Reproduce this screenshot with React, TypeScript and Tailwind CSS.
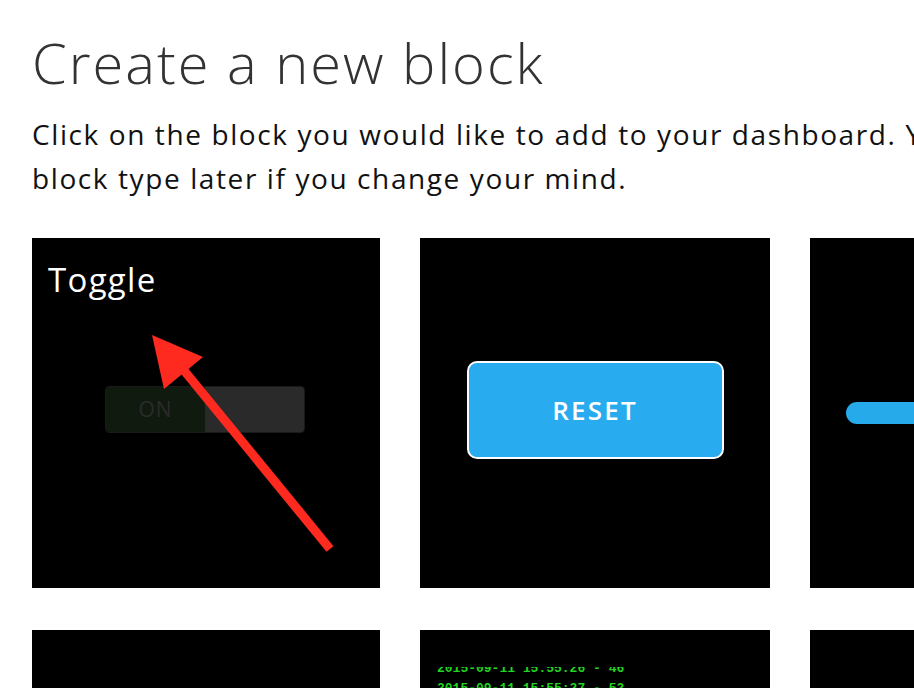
import React from "react";

function Arrow() {
  return (
    <svg className="absolute left-0 top-0" width="348" height="350" viewBox="0 0 348 350">
      <line x1="298" y1="311" x2="150" y2="130" stroke="#ff2a1f" strokeWidth="9" />
      <polygon points="120,97 171,119 132,151" fill="#ff2a1f" />
    </svg>
  );
}

function Card({ children, wide }: { children?: React.ReactNode; wide?: boolean }) {
  return (
    <div className={`relative ${wide ? "w-[350px]" : "w-[348px]"} h-[350px] shrink-0 bg-black overflow-hidden`}>
      {children}
    </div>
  );
}

export default function App() {
  return (
    <div
      className="w-[914px] h-[688px] overflow-hidden bg-white"
      style={{ fontFamily: "'Open Sans', Lato, sans-serif" }}
    >
      <div className="pl-[32px] pt-[26px] w-[1400px]">
        <h1 className="text-[56px] leading-[72px] font-light text-[#333] tracking-[2px]">Create a new block</h1>
        <p className="mt-[14px] text-[28px] leading-[44px] text-[#111] tracking-[1.6px] w-[1180px]">
          Click on the block you would like to add to your dashboard. You can change the block type later if you change your mind.
        </p>
        <div className="mt-[38px] flex gap-[40px]">
          <Card>
            <div className="pl-[16px] pt-[22px] text-[33px] leading-[40px] text-white tracking-[1.3px]">Toggle</div>
            <div className="absolute left-[73px] top-[148px] w-[200px] h-[47px] rounded-[4px] overflow-hidden flex border border-[#1a1a1a]">
              <div className="w-1/2 bg-[#111a0f] flex items-center justify-center text-[21px] text-[#2b2b2b] tracking-[1px]">ON</div>
              <div className="w-1/2 bg-[#2a2a2a]" />
            </div>
            <Arrow />
          </Card>
          <Card wide>
            <div className="flex justify-center pt-[123px]">
              <div className="w-[257px] h-[98px] rounded-[10px] border-2 border-white bg-[#29abef] flex items-center justify-center text-white text-[26px] font-semibold tracking-[2.2px]">
                RESET
              </div>
            </div>
          </Card>
          <Card>
            <div className="flex h-full items-center pl-[36px]">
              <div className="w-[300px] h-[22px] rounded-full bg-[#27aae9]" />
            </div>
          </Card>
        </div>
        <div className="mt-[42px] flex gap-[40px]">
          <Card />
          <Card wide>
            <div className="mt-[37px] ml-[17px] h-[300px] overflow-hidden">
              <div
                className="-mt-[8px] text-[13px] leading-[20px] font-bold text-[#22d322]"
                style={{ fontFamily: "'Liberation Mono', monospace" }}
              >
                <div>2015-09-11 15:55:26 - 46</div>
                <div>2015-09-11 15:55:27 - 52</div>
              </div>
            </div>
          </Card>
          <Card />
        </div>
      </div>
    </div>
  );
}
